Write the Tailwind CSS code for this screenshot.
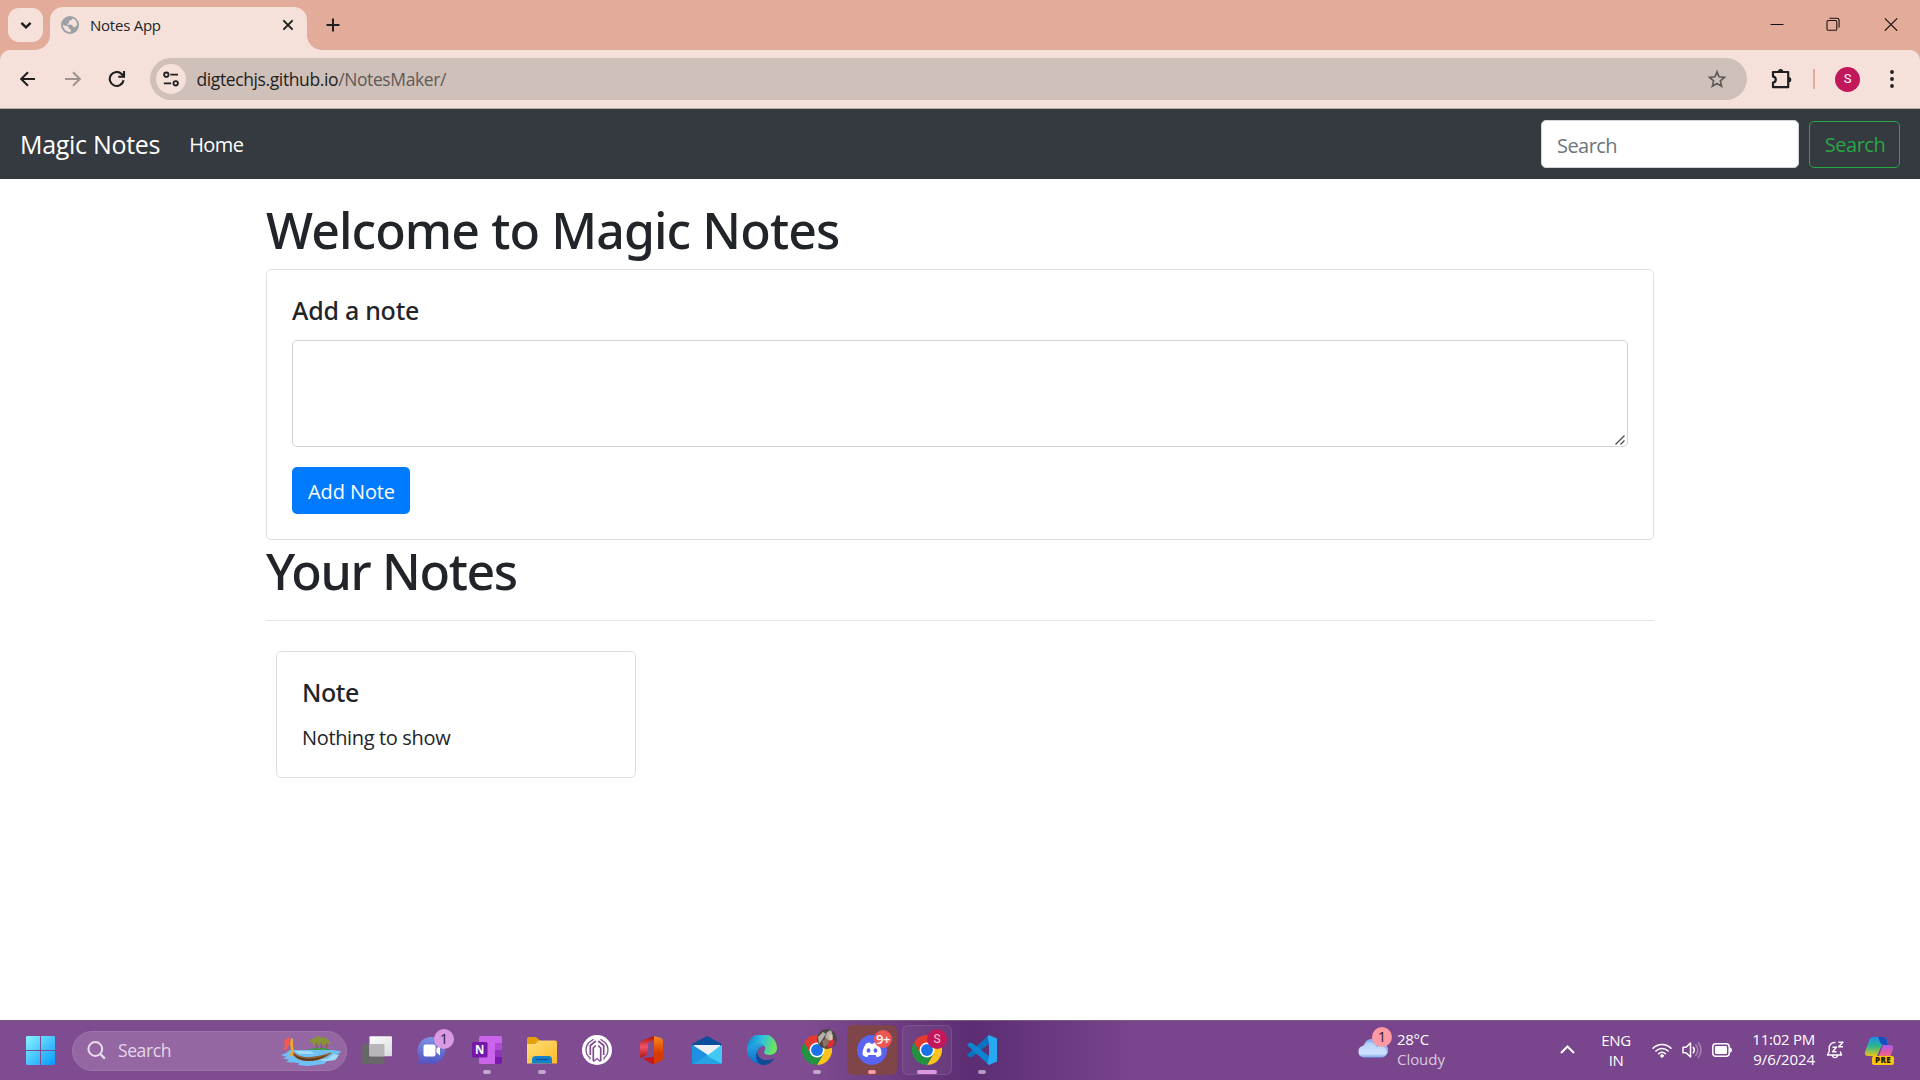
<!DOCTYPE html>
<html lang="en">
<head>
<meta charset="utf-8">
<title>Notes App</title>
<script src="https://cdn.jsdelivr.net/npm/@tailwindcss/browser@4"></script>
</head>
<body class="flex h-[1080px] w-[1920px] flex-col overflow-hidden bg-white font-['Open_Sans',sans-serif] text-[#212529]">

<!-- Tab strip -->
<header class="flex h-[50px] shrink-0 bg-[#e3ab99]">
  <div class="mt-2 ml-2 grid h-[34px] w-[35px] place-items-center rounded-[11px] bg-[#f5e1da]">
    <svg class="size-4" viewBox="0 0 16 16" fill="none" stroke="#1f1f1f" stroke-width="2.4"><path d="M3.4 5.8 8 10.4l4.6-4.6"/></svg>
  </div>
  <div class="relative mt-[7px] ml-[7px] flex h-[43px] w-[257px] items-center rounded-t-[13px] bg-[#f5e1da] pb-[7px] pl-[11px]">
    <svg class="absolute bottom-0 -left-[15px] size-[15px]" viewBox="0 0 15 15"><path d="M15 0v15H0A15 15 0 0 0 15 0z" fill="#f5e1da"/></svg>
    <svg class="absolute bottom-0 -right-[15px] size-[15px]" viewBox="0 0 15 15"><path d="M0 0v15h15A15 15 0 0 1 0 0z" fill="#f5e1da"/></svg>
    <svg class="size-[18px]" viewBox="0 0 18 18"><circle cx="9" cy="9" r="9" fill="#9aa0a6"/><path d="M11.300 2.200c.2 1.300-.6 2-1.900 2.100-1.200.1-1.500.7-1.300 1.600.2 1-.4 1.500-1.300 1.700-1 .2-.8 1.100.2 1.200h3.200c1 .1 1.400.8 1.600 1.500.3 1 1.300.9 2.200.7.8-.2 1.500-.8 2.100-1.900a7.200 7.200 0 0 0-4.800-6.900z" fill="#f5e1da"/><path d="M1.800 8.600c.9.900 2 1.300 3.600 1.300 1.500 0 2.300.5 2.300 1.700 0 .9.400 1.200 1.200 1.300 1 .1 1.200.8 1 1.600-.2.700-.4 1.200-.4 1.700A7.300 7.300 0 0 1 1.800 8.600z" fill="#f5e1da"/></svg>
    <span class="ml-[11px] text-[15px] tracking-[-0.24px]">Notes App</span>
    <svg class="ml-auto mr-[13.500px] size-3" viewBox="0 0 12 12" stroke="#1f1f1f" stroke-width="2"><path d="m1.400 1.400 9.200 9.200M10.600 1.400l-9.200 9.200"/></svg>
  </div>
  <svg class="mt-[18px] ml-[19px] size-[14px]" viewBox="0 0 14 14" stroke="#1f1f1f" stroke-width="2"><path d="M7 .5v13M.5 7h13"/></svg>
  <div class="ml-auto flex items-start pt-[17px] pr-[22px]">
    <svg class="size-[14px]" viewBox="0 0 14 14" fill="none" stroke="#111"><path d="M.5 7.500h13"/></svg>
    <svg class="ml-[42px] size-[14px]" viewBox="0 0 14 14" fill="none" stroke="#1c1310" stroke-width="1.100"><rect x="1" y="3.500" width="9.800" height="9.800" rx="1.400"/><path d="M3.500 1.300h7.300a2.300 2.300 0 0 1 2.300 2.300v7"/></svg>
    <svg class="ml-[44px] size-[14px]" viewBox="0 0 14 14" stroke="#1c1310" stroke-width="1.200"><path d="m.8 1.300 12.400 12.400M13.200 1.300.8 13.700"/></svg>
  </div>
</header>

<!-- Address toolbar -->
<div class="h-[59px] shrink-0 bg-[#e3ab99]">
  <div class="flex h-full items-center rounded-t-[10px] border-b border-[#bda8a1] bg-[#f5e1da]">
    <svg class="ml-[20px] size-4" viewBox="0 0 16 16" fill="none" stroke="#1f1f1f" stroke-width="2"><path d="M15 8H1.800M8 1.200 1.200 8 8 14.800"/></svg>
    <svg class="ml-[29px] size-4" viewBox="0 0 16 16" fill="none" stroke="#9f938f" stroke-width="2"><path d="M0 8h14.200M8 1.200 14.800 8 8 14.800"/></svg>
    <svg class="ml-[27px] size-[18px]" viewBox="0 0 18 18" fill="none" stroke="#1f1f1f" stroke-width="2.100"><path d="M15.600 10.300A7 7 0 1 1 13.900 4.200L15.600 6M16 1v5.700h-5.700"/></svg>
    <div class="ml-[24px] flex h-[42px] w-[1597px] items-center rounded-full bg-[#cfc0b9] pl-[6px] pr-[20px]">
      <div class="grid size-[30px] place-items-center rounded-full bg-[#f5e1da]">
        <svg class="size-4" viewBox="0 0 16 16" fill="none" stroke="#1f1f1f" stroke-width="1.800"><circle cx="3.300" cy="3.700" r="2.200"/><path d="M7.300 3.700H15M.8 12.300h7.400"/><circle cx="12.700" cy="12.300" r="2.200"/></svg>
      </div>
      <p class="ml-[10.500px] pt-px text-[17.5px] tracking-[-0.39px]"><span class="text-[#1f1f1f]">digtechjs.github.io</span><span class="text-[#605a58]">/NotesMaker/</span></p>
      <svg class="ml-auto size-[20px]" viewBox="0 0 20 20" fill="none" stroke="#5f5c5b" stroke-width="1.700"><path d="m10 2.800 2.100 5 5.400.5-4.100 3.600 1.200 5.300-4.600-2.800-4.600 2.800 1.200-5.300-4.100-3.600 5.400-.5z"/></svg>
    </div>
    <svg class="ml-[23px] size-[22px]" viewBox="0 0 22 22"><path d="M3 4h15.200v15.200H3v-4.600c3.700-.3 3.700-5.700 0-6z" fill="none" stroke="#1f1f1f" stroke-width="2.200" stroke-linejoin="round"/><path d="M7.900 3.600a2.700 2.700 0 0 1 5.400 0zM18.600 9a2.700 2.700 0 0 1 0 5.400z" fill="#1f1f1f"/></svg>
    <div class="ml-[21px] h-5 w-[2px] bg-[#e3ab99]"></div>
    <div class="ml-[20px] grid size-[25px] place-items-center rounded-full bg-[#c2185b] font-[Roboto,sans-serif] text-[13px] text-white">S</div>
    <svg class="ml-[30px] h-[18px] w-1" viewBox="0 0 4 18" fill="#1f1f1f"><circle cx="2" cy="2" r="1.900"/><circle cx="2" cy="9" r="1.900"/><circle cx="2" cy="16" r="1.900"/></svg>
  </div>
</div>

<!-- Navbar -->
<nav class="flex h-[70px] shrink-0 items-center bg-[#343a40] px-5 text-xl text-white">
  <span class="text-[25px] tracking-[-0.3px]">Magic Notes</span>
  <span class="ml-[29px] pt-[2px] tracking-[-0.6px]">Home</span>
  <div class="ml-auto flex items-center gap-[10px]">
    <div class="flex h-12 w-[258px] items-center rounded-[5px] border border-[#ced4da] bg-white pl-[15px] pt-[4px] tracking-[-0.55px] text-[#6c757d]">Search</div>
    <div class="grid h-[47px] w-[91px] place-items-center rounded-[5px] border border-[#28a745] pt-[2px] pl-px tracking-[-0.5px] text-[#28a745]">Search</div>
  </div>
</nav>

<!-- Page content -->
<main class="flex grow flex-col items-start pl-[266px]">
  <h1 class="mt-[21px] font-['Noto_Sans',sans-serif] text-[50px] leading-[60px] font-medium tracking-[-0.9px]">Welcome to Magic Notes</h1>
  <section class="mt-[9px] h-[271px] w-[1388px] rounded-[5px] border border-[#dfdfdf] px-[25px] pt-[25px]">
    <h5 class="font-['Noto_Sans',sans-serif] text-[25px] leading-[30px] font-medium tracking-[-0.25px]">Add a note</h5>
    <div class="relative mt-[15px] h-[107px] rounded-[5px] border border-[#ced4da]">
      <svg class="absolute right-[2px] bottom-px size-[10px]" viewBox="0 0 10 10" stroke="#4a4a4a" stroke-width="1.300"><path d="M.5 9.500 9.500.5M5.500 9.500l4-4"/></svg>
    </div>
    <div class="mt-5 grid h-[47px] w-[118px] place-items-center rounded-[5px] bg-[#007bff] pt-[3px] pl-px text-xl tracking-[-0.1px] text-white">Add Note</div>
  </section>
  <h1 class="mt-[1px] font-['Noto_Sans',sans-serif] text-[50px] leading-[60px] font-medium tracking-[-1.35px]">Your Notes</h1>
  <div class="mt-[19px] h-px w-[1388px] bg-[#e5e5e5]"></div>
  <article class="mt-[30px] ml-[10px] h-[127px] w-[360px] rounded-[5px] border border-[#dfdfdf] px-[25px] pt-[25px]">
    <h5 class="font-['Noto_Sans',sans-serif] text-[25px] leading-[30px] font-medium tracking-[-0.45px]">Note</h5>
    <p class="mt-[16px] text-xl leading-[30px] tracking-[-0.35px]">Nothing to show</p>
  </article>
</main>

<!-- Taskbar -->
<footer class="flex h-[60px] shrink-0 items-center border-t border-[#755a79] bg-[#79458c] text-[15px] text-white">
  <div class="flex h-full w-[1350px] items-center bg-linear-to-r from-[#7f4b91] from-60% via-[#5c2d73] via-72% to-[#79458c] to-84%">
    <svg class="ml-[26px] size-[29px]" viewBox="0 0 29 29"><defs><linearGradient id="win" x1="0" y1="0" x2="1" y2="1"><stop stop-color="#87f4ff"/><stop offset="1" stop-color="#0898fb"/></linearGradient></defs><path d="M1 0h13v14H0V1zM15 0h13l1 1v13H15zM0 15h14v14H1l-1-1zM15 15h14v13l-1 1H15z" fill="url(#win)"/></svg>
    <div class="ml-[17px] flex h-10 w-[275px] items-center rounded-full border border-[#9d74ab] bg-[#9467a2] pl-[14px] pr-[5px]">
      <svg class="size-[19px]" viewBox="0 0 19 19" fill="none" stroke="#e8dcec" stroke-width="2"><circle cx="8.300" cy="8" r="6.900"/><path d="m13.200 13 4.700 4.700" stroke-width="2.400"/></svg>
      <span class="ml-[12px] text-[17.5px] tracking-[-0.4px] text-[#e3d7e7]">Search</span>
      <svg class="ml-auto h-8 w-[60px]" viewBox="0 0 60 32"><path d="M9 15h42l9 1-2 3-6 1 5 2-3 3-8 1-3 3-8 1-9 1-9-1 1-2-13-1 3-2-7-2 5-1-6-2 5-2z" fill="#6fc0f5"/><path d="M33 24h13l7-5 5 1-4 5-9 1zM14 16h15l5 3H18z" fill="#a3dafa"/><path d="M27 15c5-3 18-3 22 0z" fill="#3f9950"/><path d="M36 14c1-4 0-6-2-8M40 14c1-3 2-6 0-9M45 14l1-6" stroke="#896533" stroke-width="1.300" fill="none"/><path d="M28 7c1-3 3-4 5-3 1-3 5-4 8-1 3-1 5 0 6 2 2 1 3 3 2 5-2-2-3-2-5-1l-2 2-2-4-2 4-3-4-2 4-2-4z" fill="#879336"/><path d="M9 9c2 10 10 14 21 13 9-1 15-3 21-5-2 4-12 9-22 9-12 1-20-5-20-17z" fill="#945f32"/><path d="M12 19c9 6 20 6 34 1-12 8-27 8-34-1z" fill="#5f3a22"/><path d="m10 3 2 1 0 7 1 6-2 5-2-1 1-6-1-6z" fill="#f2a733"/><path d="m3 6 6-5-1 8-2 5-4 1 2-4z" fill="#fb594d"/></svg>
    </div>
    <div class="ml-[2px] flex h-full items-center pb-px">
      <!-- Task view -->
      <div class="grid h-full w-[55px] place-items-center"><svg class="size-[30px]" viewBox="0 0 30 30"><defs><linearGradient id="tv" x2="1" y2="1"><stop stop-color="#fff"/><stop offset="1" stop-color="#dadada"/></linearGradient></defs><rect x="0" y="9" width="22.500" height="20" rx="1" fill="#686669"/><rect x="7.500" y="1.300" width="22.500" height="20" rx="1" fill="url(#tv)"/><path d="M7.500 9h15v12.300h-15z" fill="#b9b6ba"/></svg></div>
      <!-- Chat -->
      <div class="relative grid h-full w-[55px] place-items-center"><svg class="size-[29px]" viewBox="0 0 29 29"><defs><linearGradient id="ch" x2="0" y2="1"><stop stop-color="#8091df"/><stop offset="1" stop-color="#4f54c4"/></linearGradient></defs><path d="M14.500 1a13.500 13.500 0 1 1-6 25.600L1 28.500l1.500-7A13.500 13.500 0 0 1 14.500 1z" fill="url(#ch)"/><rect x="6.500" y="8.500" width="12" height="12" rx="2" fill="#fff"/><path d="m19.500 12.500 3.500-3v10l-3.500-3z" fill="#fff"/></svg><span class="absolute top-[8px] right-[5px] grid size-5 place-items-center rounded-full bg-[#d99ae2] text-[14px] leading-none text-[#271c2b]">1</span></div>
      <!-- OneNote -->
      <div class="relative grid h-full w-[55px] place-items-center"><svg class="size-[30px]" viewBox="0 0 30 30"><rect x="7" y="1" width="23" height="28" rx="1.500" fill="#ca64ea"/><path d="M23 8h7v7h-7z" fill="#ae4bd5"/><path d="M23 15h7v7h-7z" fill="#9332bf"/><path d="M23 22h7v6l-1 1h-6z" fill="#7719aa"/><rect x="0" y="7" width="15.500" height="15.500" rx="1.500" fill="#7318aa"/><text x="7.700" y="18.800" text-anchor="middle" font-family="Open Sans" font-weight="700" font-size="11.500" fill="#fff">N</text></svg><span class="absolute bottom-[5px] h-1 w-2 rounded-full bg-[#c3a6cd]"></span></div>
      <!-- File explorer -->
      <div class="relative grid h-full w-[55px] place-items-center"><svg class="size-[30px]" viewBox="0 0 30 30"><defs><linearGradient id="fe" x2="1" y2="1"><stop stop-color="#ffe07a"/><stop offset="1" stop-color="#fbb928"/></linearGradient></defs><path d="M0 4q0-2 2-2h7l4 3.500V9H0z" fill="#e5a00d"/><path d="M0 9h8l4-3.500h16q2 0 2 2V28.500H0z" fill="url(#fe)"/><path d="M5 28.500v-4q0-3.500 3.500-3.500h13q3.500 0 3.500 3.500v4z" fill="#1682ca"/><path d="M8.500 24.500h13" stroke="#0b559c" stroke-width="1.300"/></svg><span class="absolute bottom-[5px] h-1 w-2 rounded-full bg-[#c3a6cd]"></span></div>
      <!-- Round launcher -->
      <div class="grid h-full w-[55px] place-items-center"><svg class="size-[30px]" viewBox="0 0 30 30" fill="none" stroke="#7f4b91"><circle cx="15" cy="15" r="15" fill="#fff" stroke="none"/><path d="M8 24.500V23a10.500 10.500 0 0 1-1-15.500l4.500-3.300M22 24.500V23a10.500 10.500 0 0 0 1-15.500l-4.500-3.300" stroke-width="1.300"/><path d="M8.300 20v-9.500L13.800 6M21.700 20v-9.500L16.200 6" stroke-width="1.700"/><path d="M11.300 26V13l2.500-2.500M18.700 26V13l-2.500-2.500" stroke-width="1.700"/><path d="m11.500 26.500 3.500-3 3.500 3" stroke-width="1.300"/></svg></div>
      <!-- Office -->
      <div class="grid h-full w-[55px] place-items-center"><svg class="h-[28px] w-[23px]" viewBox="0 0 23 28"><defs><linearGradient id="of" x2="0" y2="1"><stop stop-color="#a61108"/><stop offset=".5" stop-color="#f0546a"/><stop offset="1" stop-color="#b3150d"/></linearGradient><linearGradient id="of2" x2="0" y2="1"><stop stop-color="#ff8a1c"/><stop offset=".6" stop-color="#d83b01"/></linearGradient></defs><path d="M14 0 3 4Q0 5 0 9v11q0 3 3 1l3-2q2-1 2-4V9q0-2 2-3l5-2z" fill="url(#of)"/><path d="m4 22 10-1 6 4-6 3q-2 0-4-1l-6-4z" fill="#c7161d"/><path d="m14 0 7 2q2 1 2 4v16q0 2-2 3l-7 3V0z" fill="url(#of2)"/></svg></div>
      <!-- Mail -->
      <div class="grid h-full w-[55px] place-items-center"><svg class="size-[30px]" viewBox="0 0 30 30"><path d="M0 9 15 1l15 8v6H0z" fill="#0a4e9c"/><path d="M2 10h26v8L15 24 2 18z" fill="#eef0f2"/><path d="M0 9.500 16 20l-7 9H0z" fill="#1d91df"/><path d="M30 9.500 4 29h25l1-1z" fill="#42c9f5"/><path d="m15 20.700 15 8.300H1z" fill="#26a3e5"/></svg></div>
      <!-- Edge -->
      <div class="grid h-full w-[55px] place-items-center"><svg class="size-[30px]" viewBox="0 0 30 30"><defs><linearGradient id="e1" x2="1" y2=".2"><stop stop-color="#0c7fd0"/><stop offset=".55" stop-color="#31c1de"/><stop offset="1" stop-color="#6be45f"/></linearGradient><linearGradient id="e2" x2="0" y2="1"><stop stop-color="#29a7e5"/><stop offset="1" stop-color="#0870cc"/></linearGradient></defs><path d="M0 14A15 15 0 0 1 30 13c0 5-4 7-8 7-3 0-5-1-5-3 0-1 2-2 1-5C15 6 4 8 0 14z" fill="url(#e1)"/><path d="M0 14C3 7 14 6 17 11c-6 0-8 6-5 11 3 4 7 6 11 5A15 15 0 0 1 0 14z" fill="url(#e2)"/><path d="M12.500 13c-4 4-2 9 2 11s10 1 13-1c-3 5-7 7-11 7-8 0-10-12-4-17z" fill="#114a92"/></svg></div>
      <!-- Chrome, first profile -->
      <div class="relative grid h-full w-[55px] place-items-center"><svg class="size-[30px]" viewBox="0 0 48 48"><path d="M24 12h20.800A24 24 0 0 0 3.200 12l10.400 18z" fill="#e33b2e"/><path d="M34.400 30 24 48A24 24 0 0 0 44.800 12H24z" fill="#fcc31e"/><path d="M13.600 30 3.200 12A24 24 0 0 0 24 48l10.400-18z" fill="#229342"/><circle cx="24" cy="24" r="12" fill="#fff"/><circle cx="24" cy="24" r="9.500" fill="#1a73e8"/></svg>
        <svg class="absolute top-[8px] right-[7px] size-5" viewBox="0 0 20 20"><circle cx="10" cy="10" r="10" fill="#4c4541"/><path d="M1 8 6 3l3 2-4 6-3 4zM10 3l4-2 2 6-4 5-4-3z" fill="#b7b0a9"/><path d="m11 12 5-2 2 3-3 5-5 1z" fill="#d92d38"/><path d="m5 12 5-3 2 5-5 5z" fill="#8a7466"/><path d="m12 5 3 1 1 4-3 2z" fill="#e2c4b8"/></svg><span class="absolute bottom-[5px] h-1 w-2 rounded-full bg-[#c3a6cd]"></span></div>
      <!-- Discord -->
      <div class="relative grid h-full w-[55px] place-items-center"><span class="absolute inset-x-[2.5px] top-[4px] h-[50px] rounded-md bg-[#804548]"></span><svg class="relative size-[30px]" viewBox="0 0 30 30"><circle cx="15" cy="15" r="15" fill="#5865f2"/><path d="M9 8.500q2-1 4-1l.7 1.200h2.600L17 7.500q2 0 4 1c2.500 4 3.800 7.500 3.400 11.500-1.500 1.200-3 1.900-4.600 2.200l-1.200-2.100h-7.200l-1.200 2.100C8.600 21.900 7.100 21.200 5.600 20 5.200 16 6.500 12.500 9 8.500z" fill="#fff"/><ellipse cx="11.500" cy="15.500" rx="1.900" ry="2.200" fill="#5865f2"/><ellipse cx="18.500" cy="15.500" rx="1.900" ry="2.200" fill="#5865f2"/></svg><span class="absolute top-[9px] right-[7px] grid size-[18px] place-items-center rounded-full bg-[#ef5552] text-[13px] leading-none font-semibold tracking-[-0.5px]">9+</span><span class="absolute bottom-[5px] h-1 w-2 rounded-full bg-[#ff99a4]"></span></div>
      <!-- Chrome, active profile -->
      <div class="relative grid h-full w-[55px] place-items-center"><span class="absolute inset-x-[2.5px] top-[4px] h-[50px] rounded-md border border-white/10 bg-white/5"></span><svg class="relative size-[30px]" viewBox="0 0 48 48"><path d="M24 12h20.800A24 24 0 0 0 3.200 12l10.400 18z" fill="#e33b2e"/><path d="M34.400 30 24 48A24 24 0 0 0 44.800 12H24z" fill="#fcc31e"/><path d="M13.600 30 3.200 12A24 24 0 0 0 24 48l10.400-18z" fill="#229342"/><circle cx="24" cy="24" r="12" fill="#fff"/><circle cx="24" cy="24" r="9.500" fill="#1a73e8"/></svg><span class="absolute top-[8px] right-[7px] grid size-5 place-items-center rounded-full bg-[#c2185b] font-[Roboto,sans-serif] text-[12px] leading-none text-[#f3c6d8]">S</span><span class="absolute bottom-[5px] h-1 w-5 rounded-full bg-[#d99ae2]"></span></div>
      <!-- VS Code -->
      <div class="relative grid h-full w-[55px] place-items-center"><svg class="size-[30px]" viewBox="0 0 30 30"><path d="M22 0 2 18l-2 2 2.500 2.300L5 22 22 9z" fill="#0b73bd"/><path d="M22 30 2 12 0 9.800 2.500 7.500 5 8l17 13z" fill="#0e83d0"/><path d="m22 0 8 3.500v23L22 30l-1.500-1.300L22 21V9l-1.500-7.500z" fill="#29a9f2"/></svg><span class="absolute bottom-[5px] h-1 w-2 rounded-full bg-[#b49abf]"></span></div>
    </div>
  </div>

  <!-- Weather and system tray -->
  <div class="flex h-full grow items-center pb-[2px]">
    <div class="relative ml-[7px] h-[30px] w-[32px]">
      <svg class="absolute top-[1px] left-0 h-[22px] w-[31px]" viewBox="0 0 31 22"><defs><linearGradient id="cl" x2="0" y2="1"><stop stop-color="#b7d0f8"/><stop offset=".75" stop-color="#cfe2fd"/><stop offset="1" stop-color="#7ba5ea"/></linearGradient></defs><path d="M7 10A8 8 0 0 1 22 7a7 7 0 0 1 4 14H16z" fill="#8fb2ee"/><path d="M6.500 21.500a6 6 0 0 1-.3-11.800 7.500 7.500 0 0 1 13.500 1.600q1.600-1 3.800-1a5.600 5.600 0 0 1 1.500 11.200z" fill="url(#cl)"/></svg>
      <span class="absolute -top-[8px] left-[15px] grid size-5 place-items-center rounded-full bg-[#ff99a4] text-[14px] leading-none text-[#271c2b]">1</span>
    </div>
    <div class="ml-[8px] w-[60px] pb-px leading-5"><p class="tracking-[-0.3px]">28°C</p><p class="tracking-[-0.05px] text-[#d9c9de]">Cloudy</p></div>
    <svg class="ml-[103px] h-[9px] w-[15px]" viewBox="0 0 15 9" fill="none" stroke="#fff" stroke-width="2"><path d="m1 8 6.500-6.500L14 8"/></svg>
    <div class="ml-[25px] w-[32px] text-center leading-5 tracking-[-0.4px]"><p>ENG</p><p>IN</p></div>
    <svg class="ml-[20px] h-4 w-5" viewBox="0 0 20 16" fill="none" stroke="#fff" stroke-width="1.600" stroke-linecap="round"><path d="M1 6.200a12.700 12.700 0 0 1 18 0M3.900 9a8.700 8.700 0 0 1 12.200 0M6.700 11.700a4.700 4.700 0 0 1 6.600 0"/><circle cx="10" cy="13.900" r="1.300" fill="#fff" stroke-width="1"/></svg>
    <svg class="ml-[10px] h-[18px] w-5" viewBox="0 0 20 18" fill="none" stroke="#fff" stroke-width="1.500" stroke-linejoin="round" stroke-linecap="round"><path d="M1 6.300h3L8.500 2v14L4 11.700H1z"/><path d="M11.300 6.300q2 2.700 0 5.400"/><path d="M13.800 3.800q4 5.200 0 10.400M16.300 1.500q5.400 7.500 0 15" opacity=".35"/></svg>
    <svg class="ml-[10px] h-[14px] w-5" viewBox="0 0 20 14"><rect x=".8" y=".8" width="16.400" height="12.400" rx="3" fill="none" stroke="#fff" stroke-width="1.500"/><rect x="3" y="3" width="12" height="8" rx="1.200" fill="#fff"/><path d="M18 4.500q2 0 2 2.500t-2 2.500z" fill="#fff"/></svg>
    <div class="ml-[18px] w-[65px] pb-px text-right leading-5"><p class="tracking-[-0.25px]">11:02 PM</p><p class="tracking-[-0.1px]">9/6/2024</p></div>
    <svg class="ml-[11px] size-[18px]" viewBox="0 0 18 18" fill="none" stroke="#fff" stroke-width="1.400" stroke-linejoin="round"><path d="M9.500 1.500C5.500 1 3.200 4 3.200 7v3.500L1.500 14h14l-1.300-3.500M6.500 14.500c.5 2.800 4.500 2.800 5 0"/><path d="M6.500 6.200h4l-4 4.500h4M12.500 1.200H17l-4.500 4.500H17"/></svg>
    <div class="relative ml-[21px] h-[30px] w-[31px]">
      <svg class="absolute top-[2px] left-0 h-[25px] w-[30px]" viewBox="0 0 30 25"><defs><linearGradient id="c1" x2="0" y2="1"><stop stop-color="#1690ea"/><stop offset=".5" stop-color="#32b68d"/><stop offset="1" stop-color="#e9c719"/></linearGradient><linearGradient id="c2" x2="0" y2="1"><stop stop-color="#a75bed"/><stop offset=".5" stop-color="#e45b9b"/><stop offset="1" stop-color="#fa9551"/></linearGradient></defs><path d="M18 8h7q4 0 3 4l-3 8q-1 4-5 4h-8z" fill="url(#c2)"/><path d="M9 0h9q3 0 4 4l1 3h-3q-3 0-4 3l-4 9H3q-4 0-3-4L4 4q1-4 5-4z" fill="url(#c1)"/><path d="M13 0h5q3 0 4 4l1 4h-4q-3 0-4-3z" fill="#174fc3"/></svg>
      <span class="absolute top-[21px] left-[7px] grid h-[9px] w-[22px] place-items-center rounded-[2px] bg-[#fcc40d] text-[8px] leading-none font-extrabold tracking-[0.4px] text-[#1c1600]">PRE</span>
    </div>
  </div>
</footer>
</body>
</html>
